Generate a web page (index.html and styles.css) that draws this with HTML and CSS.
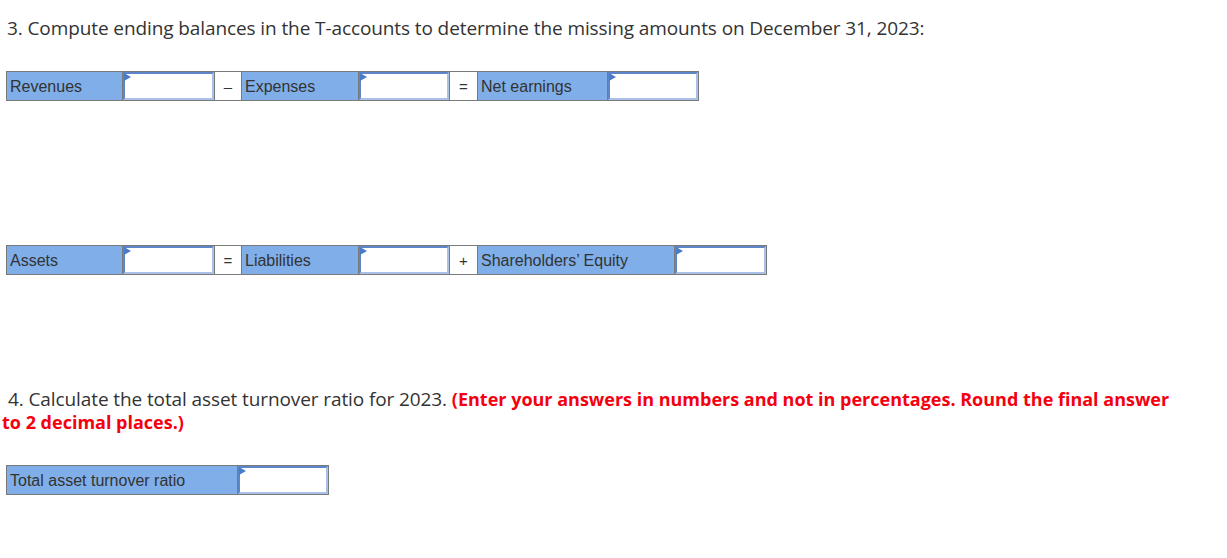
FILE: index.html
```html
<!DOCTYPE html>
<html>
<head>
<meta charset="utf-8">
<link rel="stylesheet" href="styles.css">
</head>
<body>
<div class="page">
  <p class="q q3">3. Compute ending balances in the T-accounts to determine the missing amounts on December 31, 2023:</p>

  <table class="eq eq1">
    <colgroup>
      <col class="c-l1"><col class="c-in"><col class="c-op1"><col class="c-l2"><col class="c-in2"><col class="c-op2"><col class="c-l3"><col class="c-in2">
    </colgroup>
    <tr>
      <td class="lbl">Revenues</td>
      <td class="inp"><span class="box"></span></td>
      <td class="op">–</td>
      <td class="lbl">Expenses</td>
      <td class="inp"><span class="box"></span></td>
      <td class="op">=</td>
      <td class="lbl">Net earnings</td>
      <td class="inp"><span class="box"></span></td>
    </tr>
  </table>

  <table class="eq eq2">
    <colgroup>
      <col class="c-l1"><col class="c-in"><col class="c-op1"><col class="c-l2"><col class="c-in2"><col class="c-op2"><col class="c-l3b"><col class="c-in"></colgroup>
    <tr>
      <td class="lbl">Assets</td>
      <td class="inp"><span class="box"></span></td>
      <td class="op">=</td>
      <td class="lbl">Liabilities</td>
      <td class="inp"><span class="box"></span></td>
      <td class="op">+</td>
      <td class="lbl">Shareholders’ Equity</td>
      <td class="inp"><span class="box"></span></td>
    </tr>
  </table>

  <p class="q q4">4. Calculate the total asset turnover ratio for 2023. <strong class="warn">(Enter your answers in numbers and not in percentages. Round the final answer to 2 decimal places.)</strong></p>

  <table class="eq eq3">
    <colgroup><col class="c-big"><col class="c-in2"></colgroup>
    <tr>
      <td class="lbl">Total asset turnover ratio</td>
      <td class="inp"><span class="box"></span></td>
    </tr>
  </table>
</div>
</body>
</html>
```
FILE: styles.css
```css
html, body {
  margin: 0;
  padding: 0;
  background: #ffffff;
}
.page {
  padding: 0 0 0 2px;
  font-family: "Open Sans", "Lato", sans-serif;
  color: #333333;
}
.q {
  margin: 0;
  font-size: 19px;
  line-height: 23px;
  letter-spacing: -0.1px;
}
.q3 {
  padding-top: 17px;
  padding-left: 5px;
}
.q4 {
  margin-top: 113px;
  text-indent: 6px;
  width: 1172px;
}
.warn {
  color: #f5000f;
  font-weight: 700;
  font-size: 18px;
  letter-spacing: 0;
}
.eq {
  border-collapse: collapse;
  table-layout: fixed;
  margin-left: 4px;
  font-family: "Liberation Sans", Arial, sans-serif;
  font-size: 16px;
  color: #333333;
}
.eq1 { margin-top: 31px; width: 692px; }
.eq2 { margin-top: 144px; width: 760px; }
.eq3 { margin-top: 31px; width: 322px; }
.c-l1 { width: 116px; }
.c-in { width: 92px; }
.c-in2 { width: 91px; }
.c-op1 { width: 27px; }
.c-l2 { width: 117px; }
.c-op2 { width: 28px; }
.c-l3 { width: 130px; }
.c-l3b { width: 197px; }
.c-big { width: 231px; }
.eq td {
  border: 1px solid #7a7a7a;
  height: 29px;
  padding: 0;
  box-sizing: border-box;
  padding-top: 1px;
}
.lbl {
  background: #7faee8;
  padding-left: 3px !important;
  white-space: nowrap;
  overflow: hidden;
}
.op {
  background: #ffffff;
  text-align: center;
  font-size: 15px;
}
.inp {
  background: #ffffff;
  position: relative;
}
.box {
  position: absolute;
  left: 0;
  top: 0;
  right: 0;
  bottom: 0;
  border: 2px solid #5c86c9;
  border-bottom-color: #a9c1e6;
  border-right-color: #a9c1e6;
  background: #ffffff;
}
.box::before {
  content: "";
  position: absolute;
  left: -1px;
  top: -1px;
  border-left: 7px solid #4a7bcb;
  border-top: 4px solid transparent;
  border-bottom: 4px solid transparent;
}
```
